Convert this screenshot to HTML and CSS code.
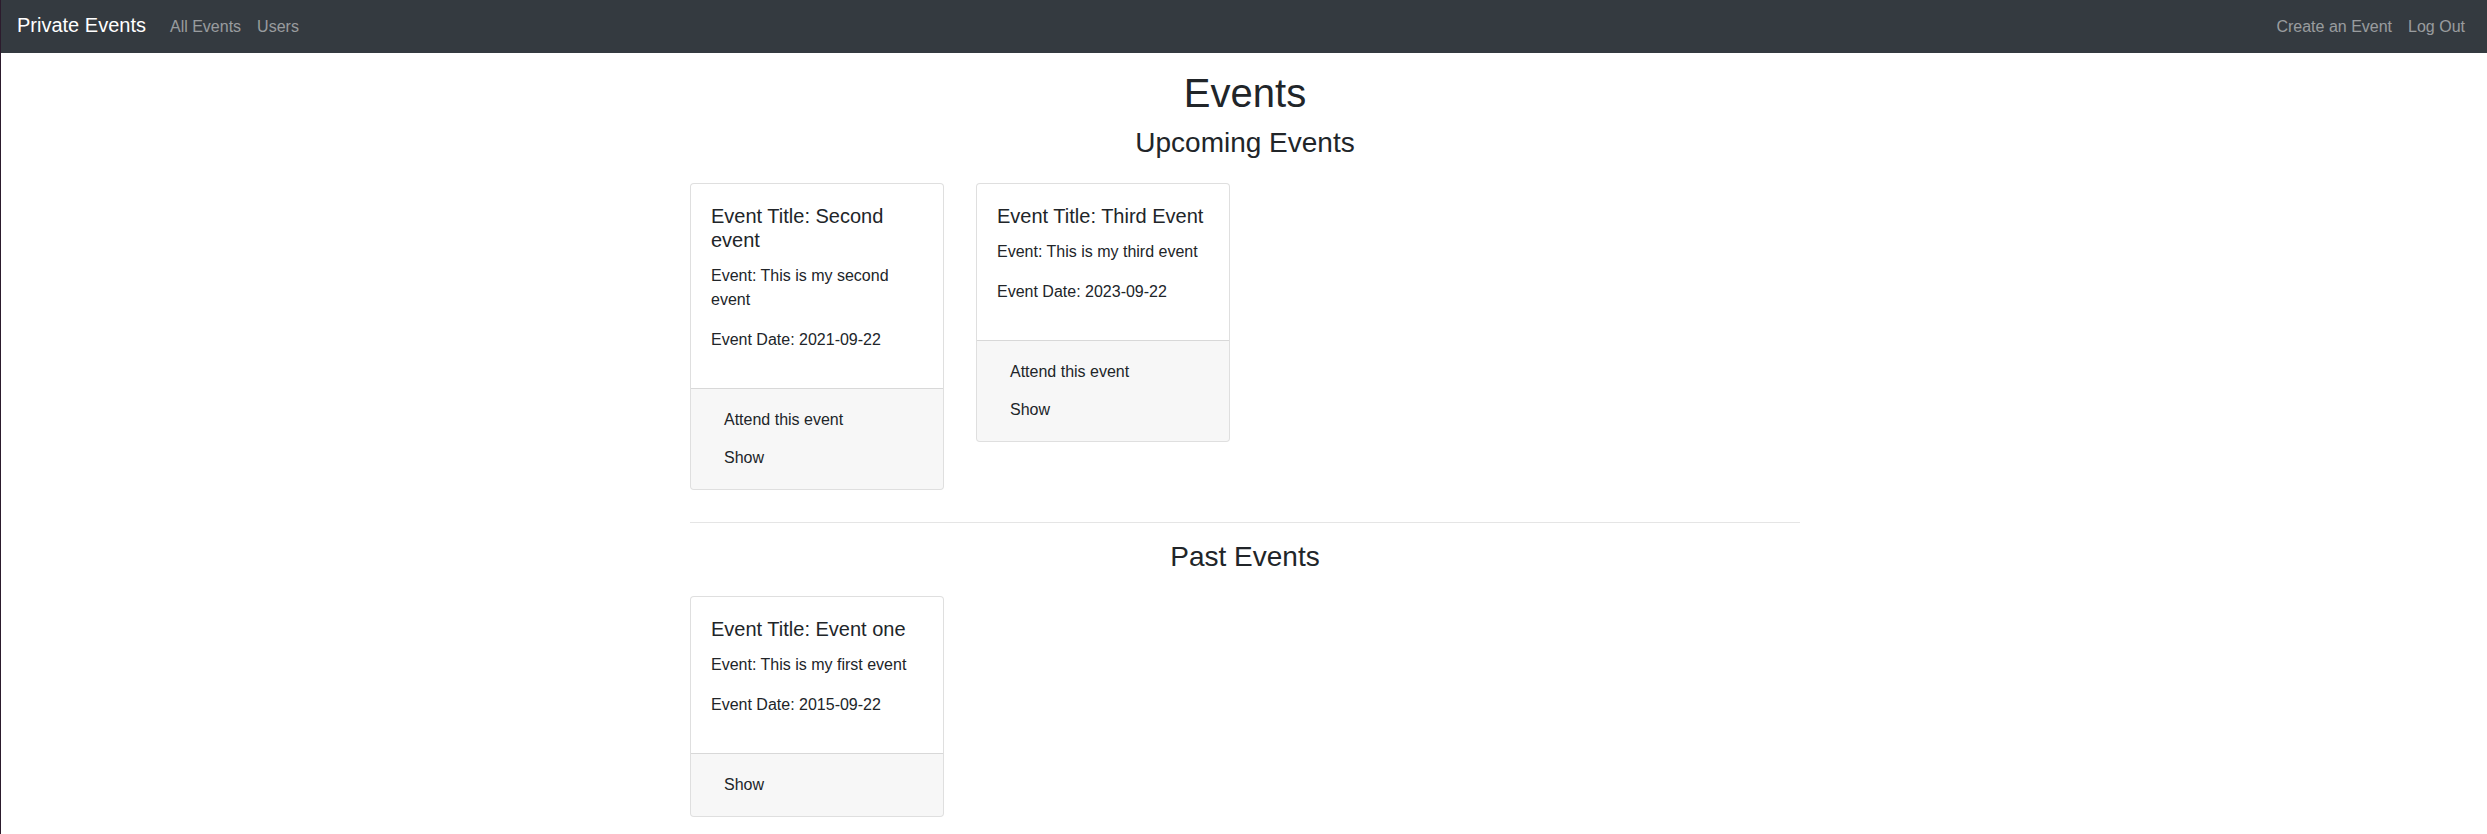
FILE: index.html
```html
<!DOCTYPE html>
<html lang="en">
<head>
<meta charset="utf-8">
<title>Private Events</title>
<link rel="stylesheet" href="styles.css">
</head>
<body>
<nav class="navbar">
  <div class="nav-left">
    <a class="brand" href="#">Private Events</a>
    <a class="nav-link" href="#">All Events</a>
    <a class="nav-link" href="#">Users</a>
  </div>
  <div class="nav-right">
    <a class="nav-link" href="#">Create an Event</a>
    <a class="nav-link" href="#">Log Out</a>
  </div>
</nav>
<main class="container">
  <h1 class="page-title">Events</h1>
  <h3 class="section-title">Upcoming Events</h3>
  <div class="card-row">
    <div class="card">
      <div class="card-body">
        <h5 class="card-title">Event Title: Second event</h5>
        <p class="card-text">Event: This is my second event</p>
        <p class="card-text">Event Date: 2021-09-22</p>
      </div>
      <div class="card-footer">
        <a class="btn" href="#">Attend this event</a>
        <a class="btn" href="#">Show</a>
      </div>
    </div>
    <div class="card">
      <div class="card-body">
        <h5 class="card-title">Event Title: Third Event</h5>
        <p class="card-text">Event: This is my third event</p>
        <p class="card-text">Event Date: 2023-09-22</p>
      </div>
      <div class="card-footer">
        <a class="btn" href="#">Attend this event</a>
        <a class="btn" href="#">Show</a>
      </div>
    </div>
  </div>
  <hr class="divider">
  <h3 class="section-title">Past Events</h3>
  <div class="card-row">
    <div class="card">
      <div class="card-body">
        <h5 class="card-title">Event Title: Event one</h5>
        <p class="card-text">Event: This is my first event</p>
        <p class="card-text">Event Date: 2015-09-22</p>
      </div>
      <div class="card-footer">
        <a class="btn" href="#">Show</a>
      </div>
    </div>
  </div>
</main>
</body>
</html>
```

FILE: styles.css
```css
* {
  box-sizing: border-box;
}

body {
  margin: 0;
  min-height: 100vh;
  border-left: 1px solid #2c1b2d;
  font-family: "Liberation Sans", Arial, sans-serif;
  font-size: 16px;
  line-height: 1.5;
  color: #212529;
  background: #ffffff;
}

a {
  text-decoration: none;
}

.navbar {
  height: 53px;
  background: #343a40;
  display: flex;
  align-items: center;
  justify-content: space-between;
  padding: 0 14px 0 16px;
}

.nav-left,
.nav-right {
  display: flex;
  align-items: center;
}

.brand {
  font-size: 20px;
  line-height: 30px;
  color: #ffffff;
  margin-right: 16px;
  margin-bottom: 3px;
}

.nav-link {
  color: rgba(255, 255, 255, 0.5);
  padding: 0 8px;
  line-height: 24px;
}

.container {
  width: 1112px;
  margin: 0 auto;
  padding: 16px 0 0 2px;
}

.page-title {
  margin: 0 0 8px;
  font-size: 40px;
  font-weight: 400;
  line-height: 1.2;
  text-align: center;
}

.section-title {
  margin: 0 0 8px;
  padding-top: 1px;
  font-size: 28px;
  font-weight: 400;
  line-height: 1.2;
  text-align: center;
}

.card-row {
  display: flex;
  align-items: flex-start;
  gap: 32px;
  margin-top: 23px;
}

.card {
  width: 254px;
  border: 1px solid rgba(0, 0, 0, 0.125);
  border-radius: 4px;
  margin-bottom: 16px;
  background: #ffffff;
  overflow: hidden;
}

.card-body {
  padding: 20px;
}

.card-title {
  margin: 0 0 12px;
  font-size: 20px;
  font-weight: 400;
  line-height: 1.2;
}

.card-text {
  margin: 0 0 16px;
}

.card-footer {
  background: rgba(0, 0, 0, 0.03);
  border-top: 1px solid rgba(0, 0, 0, 0.125);
  padding: 12px 20px;
}

.btn {
  display: block;
  width: fit-content;
  padding: 6px 12px;
  border: 1px solid transparent;
  line-height: 24px;
  color: #212529;
}

.divider {
  margin: 16px 0;
  border: 0;
  border-top: 1px solid rgba(0, 0, 0, 0.1);
}
```
